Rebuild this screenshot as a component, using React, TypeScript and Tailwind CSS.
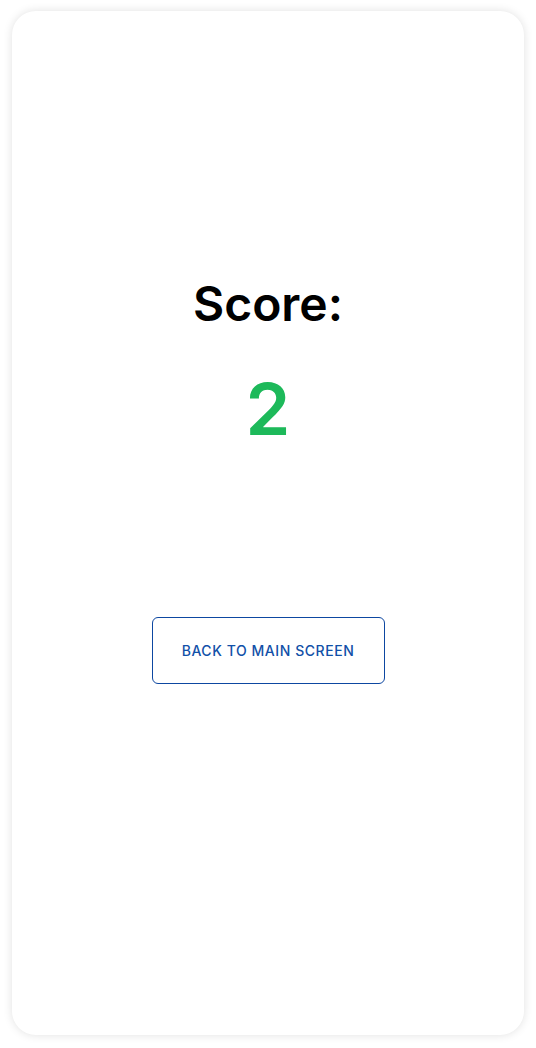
export default function App() {
  return (
    <div className="min-h-screen w-full bg-white px-3 py-[11px] font-['Inter',sans-serif]">
      <div className="flex h-[1024px] flex-col items-center rounded-[24px] bg-white pt-[269px] shadow-[0_0_10px_rgba(0,0,0,0.12)]">
        <h1 className="text-[48px] font-semibold leading-none text-black">Score:</h1>
        <div className="mt-[45px] text-[72px] font-semibold leading-none text-[#1db95a]">2</div>
        <button className="mt-[172px] h-[67px] w-[233px] rounded-[6px] border border-[#0d47a1] text-[14px] font-medium uppercase tracking-[0.04em] text-[#1150a8]">
          Back to main screen
        </button>
      </div>
    </div>
  );
}
